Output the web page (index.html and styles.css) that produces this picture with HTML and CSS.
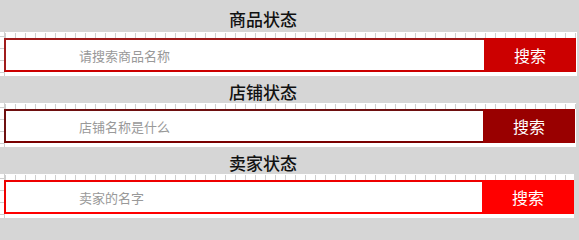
FILE: index.html
```html
<!DOCTYPE html>
<html lang="zh-CN">
<head>
<meta charset="utf-8">
<title>搜索</title>
<link rel="stylesheet" href="styles.css">
</head>
<body>
  <section class="block block-first">
    <h3 class="title">商品状态</h3>
    <div class="canvas">
      <form class="search search-red">
        <input class="search-input" type="text" placeholder="请搜索商品名称">
        <button class="search-btn" type="button">搜索</button>
      </form>
    </div>
  </section>
  <section class="block">
    <h3 class="title">店铺状态</h3>
    <div class="canvas">
      <form class="search search-dark">
        <input class="search-input" type="text" placeholder="店铺名称是什么">
        <button class="search-btn" type="button">搜索</button>
      </form>
    </div>
  </section>
  <section class="block">
    <h3 class="title">卖家状态</h3>
    <div class="canvas">
      <form class="search search-bright">
        <input class="search-input" type="text" placeholder="卖家的名字">
        <button class="search-btn" type="button">搜索</button>
      </form>
    </div>
  </section>
</body>
</html>
```

FILE: styles.css
```css
html, body {
  margin: 0;
  padding: 0;
}
body {
  width: 579px;
  height: 227px;
  overflow: hidden;
  background: #d6d6d6;
  font-family: "Noto Sans CJK SC", "Noto Sans", sans-serif;
}
.block {
  display: flex;
  flex-direction: column;
}
.title {
  margin: 0;
  padding: 6px 53px 0 0;
  height: 21px;
  line-height: 20px;
  font-size: 17px;
  font-weight: 500;
  color: #111;
  text-align: center;
}
.block-first .title {
  padding-top: 9px;
  height: 23px;
}
.canvas {
  margin-right: 2px;
  padding: 6px 1px 4px 4px;
  background-color: #fff;
  background-image:
    linear-gradient(to right, #cfcfcf 1px, transparent 1px),
    linear-gradient(to bottom, #cfcfcf 1px, transparent 1px),
    linear-gradient(to right, transparent 4px, #cfcfcf 4px, #cfcfcf 5px, transparent 5px);
  background-size: 10px 5px, 4px 12px, 5px 100%;
  background-position: 5px 1px, 0 16px, 0 0;
  background-repeat: repeat-x, repeat-y, no-repeat;
}
.search {
  display: flex;
  height: 34px;
  margin: 0;
}
.search-input {
  flex: 1;
  min-width: 0;
  box-sizing: border-box;
  height: 34px;
  margin: 0;
  padding: 0 0 0 73px;
  border-width: 2px 0 2px 2px;
  border-style: solid;
  background: #fff;
  font-family: inherit;
  font-size: 13px;
  color: #333;
  outline: none;
}
.search-input::placeholder {
  color: #999;
}
.search-btn {
  width: 92px;
  height: 34px;
  margin: 0;
  padding: 0;
  border: none;
  color: #fff;
  font-family: inherit;
  font-size: 16px;
  cursor: pointer;
}
.search-red .search-input {
  border-color: #a01c1c #c00 #c00 #a01c1c;
}
.search-red .search-btn {
  background: #c00;
}
.search-dark .search-input {
  border-color: #6e1010 #7a0000 #7a0000 #6e1010;
}
.search-dark .search-btn {
  background: #900;
}
.search-bright .search-input {
  border-color: #e00 #f00 #f00 #e00;
}
.search-bright .search-btn {
  background: #f00;
}
.block:nth-child(2) .canvas {
  margin-right: 3px;
}
.block:nth-child(3) .canvas {
  margin-right: 5px;
  padding-right: 0;
}
```
